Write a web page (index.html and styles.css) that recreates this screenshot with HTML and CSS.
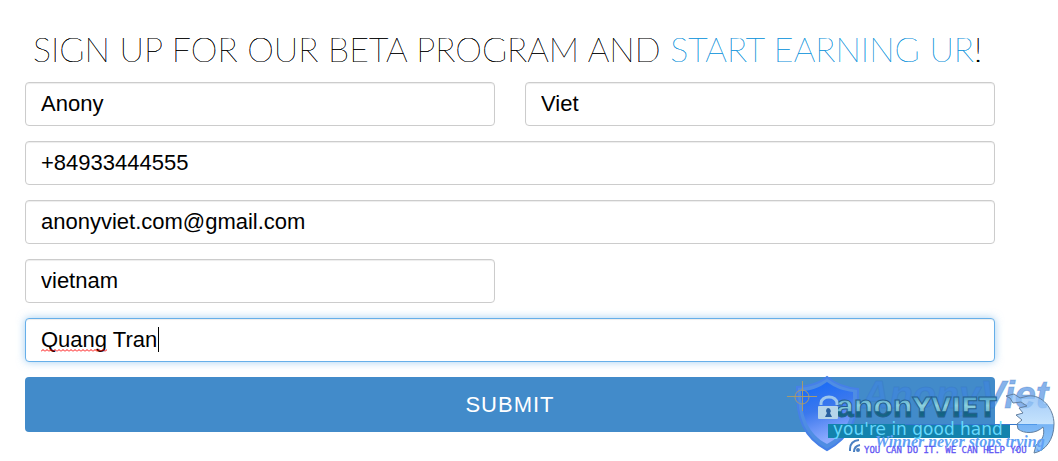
FILE: index.html
```html
<!DOCTYPE html>
<html lang="en">
<head>
<meta charset="utf-8">
<meta name="viewport" content="width=device-width, initial-scale=1">
<title>Beta program sign up</title>
<link rel="stylesheet" href="styles.css">
</head>
<body>
<main class="page">
  <h1 class="title">SIGN UP FOR OUR BETA PROGRAM AND <span class="title-accent">START EARNING UR</span>!</h1>
  <form class="form">
    <input class="field" type="text" aria-label="First name" value="Anony">
    <input class="field" type="text" aria-label="Last name" value="Viet">
    <input class="field wide" type="tel" aria-label="Phone" value="+84933444555">
    <input class="field wide" type="email" aria-label="Email" value="anonyviet.com@gmail.com">
    <input class="field" type="text" aria-label="Country" value="vietnam">
    <div class="field-wrap wide">
      <input class="field active" type="text" aria-label="Full name" value="Quang Tran" spellcheck="false">
      <svg class="spelling" width="66" height="3" aria-hidden="true">
        <defs><pattern id="wave" width="4" height="3" patternUnits="userSpaceOnUse"><path d="M0 2.5 2 .5 4 2.5" fill="none" stroke="#f00"/></pattern></defs>
        <rect width="66" height="3" fill="url(#wave)"/>
      </svg>
      <span class="caret"></span>
    </div>
    <button class="submit wide" type="submit">SUBMIT</button>
  </form>
  <svg class="watermark" width="278" height="96" viewBox="780 365 278 96" role="img" aria-label="AnonyViet">
    <defs>
      <linearGradient id="shield" x1="0" y1="0" x2="0.3" y2="1"><stop offset="0" stop-color="#1268f8"/><stop offset=".5" stop-color="#3b78ed"/><stop offset="1" stop-color="#8eabff"/></linearGradient>
      <linearGradient id="word" gradientUnits="userSpaceOnUse" x1="0" y1="397" x2="0" y2="418"><stop offset="0" stop-color="#4c9fc8"/><stop offset=".4" stop-color="#8bd0de"/><stop offset=".66" stop-color="#75bad2"/><stop offset=".7" stop-color="#135f83"/><stop offset="1" stop-color="#146b85"/></linearGradient>
      <linearGradient id="globe" x1="0" y1="0" x2="0" y2="1"><stop offset="0" stop-color="#83b8f4"/><stop offset=".5" stop-color="#b1d9fc"/><stop offset=".52" stop-color="#4a9bf1"/><stop offset="1" stop-color="#70b8fb"/></linearGradient>
    </defs>
    <path d="M827 377C820 383 808 387 797 387C796 418 804 438 827 450C850 438 859 418 858 389C847 388 835 384 827 377Z" fill="#4f8de3" stroke="#4680e8" stroke-width="2"/>
    <path d="M827 382C819 388 810 391 801 391C801 416 808 434 827 444C846 434 854 416 853 392C844 391 835 388 827 382Z" fill="url(#shield)"/>
    <g fill="none" stroke="#a59a71"><circle cx="802" cy="397" r="7"/><path d="M787 396.500H817M802.500 381V411"/></g>
    <text class="mark-name" x="862" y="408">AnonyViet</text>
    <text class="mark-word" x="836" y="417" fill="url(#word)">anon<tspan class="mark-caps">YVIET</tspan></text>
    <path d="M821 405V403A8 6 0 0 1 837 403V405" fill="none" stroke="#9cc6ed" stroke-width="3"/>
    <rect x="818" y="406" width="20" height="13" rx="1" fill="#b5d4e9"/>
    <path d="M828 408a3 3 0 0 1 2 5l2 4h-7l2-4a3 3 0 0 1 1-5Z" fill="#285f9f"/>
    <rect x="828" y="424" width="182" height="14" fill="#1383ad"/>
    <path d="M905 424.500H1037" stroke="#3578ce"/>
    <text class="mark-tag" x="833" y="435">you're in good hand</text>
    <path d="M1006 396L1014 394 1020 398 1028 396C1042 394 1054 409 1054 424C1054 440 1045 451 1034 453L1036 445C1043 440 1045 434 1043 427C1036 434 1024 434 1018 429L1017 424 1022 420 1016 415 1023 413 1019 408 1027 406 1021 402 1013 403 1010 398Z" fill="url(#globe)" fill-opacity=".75" stroke="#627fa0"/>
    <text class="mark-motto" x="875" y="447">Winner never stops trying</text>
    <g fill="none" stroke="#4b80c2" stroke-width="2"><path d="M850 451V449Q850 441 859 440M854 452Q854 446 860 445"/><circle cx="858" cy="450" r="1"/></g>
    <text class="mark-help" x="864" y="453">YOU CAN DO IT. WE CAN HELP YOU</text>
  </svg>
</main>
</body>
</html>
```
FILE: styles.css
```css
* { box-sizing: border-box; }
body { margin: 0; background: #fff; color: #000; font-family: "Liberation Sans", Arial, sans-serif; }
.page { position: relative; padding: 29px 63px 29px 25px; }
.title { margin: 0 0 13px; padding-left: 8px; font: 100 34px/40px Lato, sans-serif; white-space: nowrap; text-shadow: 0 0 0 currentColor, 0 0 0 currentColor; }
.title-accent { color: #1c98dd; text-shadow: 0 0 0 currentColor, 0 0 0 currentColor; }
.form { display: grid; grid-template-columns: 1fr 1fr; gap: 15px 30px; }
.wide { grid-column: 1 / -1; }
.field { display: block; width: 100%; height: 44px; padding: 6px 15px; border: 1px solid #ccc; border-radius: 4px; background: #fff; color: #000; font: 22px/30px "Liberation Sans", Arial, sans-serif; box-shadow: inset 0 1px 1px rgba(0, 0, 0, .075); outline: none; }
.field-wrap { position: relative; }
.active { border-color: #66afe9; box-shadow: inset 0 1px 1px rgba(0, 0, 0, .075), 0 0 8px rgba(102, 175, 233, .6); }
.spelling { position: absolute; left: 16px; top: 31px; }
.caret { position: absolute; left: 133px; top: 9px; width: 1px; height: 25px; background: #000; }
.submit { height: 55px; border: 0; border-radius: 4px; background: #428bca; color: #fff; font: 22px/30px "Liberation Sans", Arial, sans-serif; letter-spacing: 1px; }
.watermark { position: absolute; right: 0; top: 365px; pointer-events: none; }
.mark-word { font: bold 32px "Liberation Sans", sans-serif; stroke: #24608f; stroke-width: 1px; }
.mark-caps { font: bold 26px "DejaVu Sans", sans-serif; }
.mark-name { font: italic bold 38px "Liberation Sans", sans-serif; fill: #3f86e0; fill-opacity: .65; stroke: #3470bd; stroke-opacity: .3; }
.mark-tag { font: 17px "DejaVu Sans", sans-serif; fill: #66d7fc; }
.mark-motto { font: italic bold 16px "Liberation Serif", serif; fill: #61a0f5; }
.mark-help { font: 9px "DejaVu Sans Mono", monospace; fill: #6257f4; stroke: #6257f4; stroke-width: .3px; }
```
